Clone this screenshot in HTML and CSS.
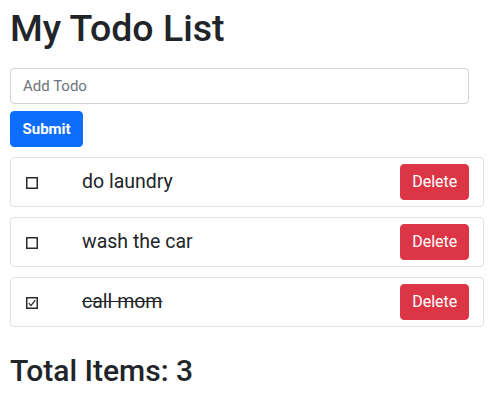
FILE: index.html
```html
<!DOCTYPE html>
<html>
<head>
<meta charset="utf-8">
<link rel="stylesheet" href="styles.css">
</head>
<body>
<div class="app">
  <h1 class="title">My Todo List</h1>
  <form class="add-form">
    <input class="add-input" type="text" placeholder="Add Todo">
    <button class="btn btn-primary" type="button">Submit</button>
  </form>
  <ul class="todo-list">
    <li class="todo">
      <span class="check-cell">
        <svg class="check" width="12" height="12" viewBox="0 0 12 12" role="checkbox" aria-checked="false"><rect x="0.75" y="0.75" width="10.5" height="10.5" fill="#fff" stroke="#2b2b2b" stroke-width="1.5"/></svg>
      </span>
      <span class="todo-text">do laundry</span>
      <button class="btn btn-danger" type="button">Delete</button>
    </li>
    <li class="todo">
      <span class="check-cell">
        <svg class="check" width="12" height="12" viewBox="0 0 12 12" role="checkbox" aria-checked="false"><rect x="0.75" y="0.75" width="10.5" height="10.5" fill="#fff" stroke="#2b2b2b" stroke-width="1.5"/></svg>
      </span>
      <span class="todo-text">wash the car</span>
      <button class="btn btn-danger" type="button">Delete</button>
    </li>
    <li class="todo">
      <span class="check-cell">
        <svg class="check" width="12" height="12" viewBox="0 0 12 12" role="checkbox" aria-checked="true"><rect x="0.75" y="0.75" width="10.5" height="10.5" fill="#fff" stroke="#2b2b2b" stroke-width="1.5"/><path d="M2.8 6.2 L5 8.6 L9.2 3.2" fill="none" stroke="#222" stroke-width="1.2"/></svg>
      </span>
      <span class="todo-text done">call mom</span>
      <button class="btn btn-danger" type="button">Delete</button>
    </li>
  </ul>
  <h2 class="total">Total Items: 3</h2>
</div>
</body>
</html>
```

FILE: styles.css
```css
* { box-sizing: border-box; }
html { font-size: 15px; }
html, body { margin: 0; padding: 0; background: #fff; }
body {
  font-family: Roboto, "Liberation Sans", sans-serif;
  color: #212529;
  font-size: 15px;
  line-height: 1.5;
}
.app {
  padding: 6px 15px 0 10px;
}
.title {
  margin: 0 0 17px;
  font-size: 37.5px;
  font-weight: 500;
  line-height: 1.2;
}
.add-form {
  display: flex;
  flex-direction: column;
  align-items: flex-start;
  gap: 7px;
  margin: 0 0 10px;
}
.add-input {
  width: 459px;
  height: 36px;
  padding: 6px 12px;
  font: 15px Roboto, sans-serif;
  color: #212529;
  border: 1px solid #ced4da;
  border-radius: 4px;
  outline: none;
}
.add-input::placeholder { color: #6c757d; }
.btn {
  font-family: Roboto, sans-serif;
  font-size: 15px;
  line-height: 22px;
  padding: 6px 11.5px;
  border: 1px solid transparent;
  border-radius: 4px;
  color: #fff;
  cursor: pointer;
}
.btn-primary { background: #0d6efd; border-color: #0d6efd; font-weight: 700; }
.btn-danger {
  background: #dc3545;
  border-color: #dc3545;
  font-weight: 400;
  font-size: 16px;
  padding: 6px 10.75px;
}
.todo-list {
  list-style: none;
  margin: 0;
  padding: 0;
  display: flex;
  flex-direction: column;
  gap: 10px;
}
.todo {
  display: flex;
  align-items: center;
  height: 50px;
  padding: 0 14px 0 0;
  border: 1px solid #dee2e6;
  border-radius: 4px;
}
.check-cell {
  width: 71px;
  display: flex;
  padding-left: 15px;
  padding-top: 2px;
}
.check {
  display: block;
}
.todo-text {
  flex: 1;
  font-size: 19.5px;
  line-height: 24px;
}
.done { text-decoration: line-through; }
.total {
  margin: 26px 0 0;
  font-size: 30px;
  font-weight: 500;
  line-height: 1.2;
}
```
